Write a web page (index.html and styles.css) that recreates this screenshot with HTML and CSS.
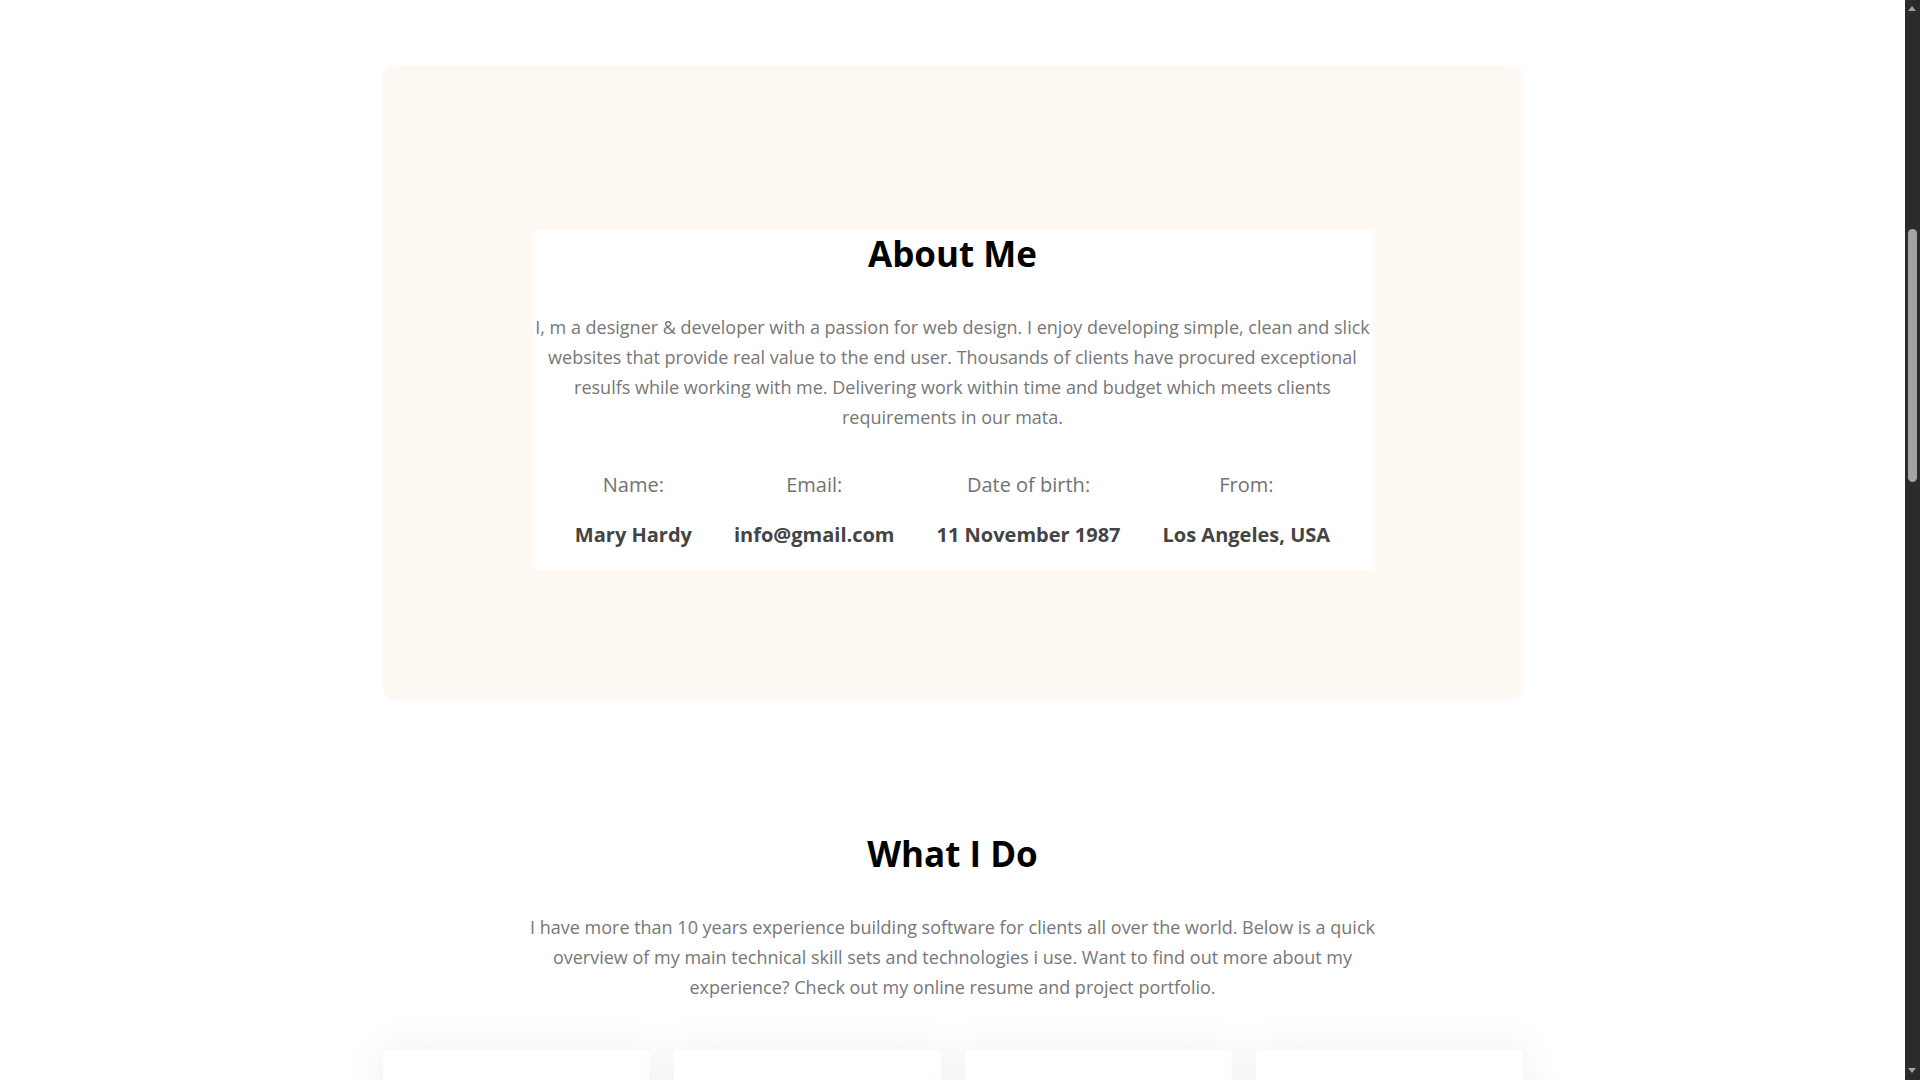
FILE: index.html
```html
<!DOCTYPE html>
<html lang="en">
<head>
<meta charset="utf-8">
<title>About Me</title>
<link rel="stylesheet" href="styles.css">
</head>
<body>
<div class="page">
  <section class="about">
    <div class="container">
      <div class="about-card">
        <div class="about-inner">
          <h2 class="section-title">About Me</h2>
          <p class="section-text">I, m a designer &amp; developer with a passion for web design. I enjoy developing simple, clean and slick websites that provide real value to the end user. Thousands of clients have procured exceptional resulfs while working with me. Delivering work within time and budget which meets clients requirements in our mata.</p>
          <div class="info">
            <div class="info-item"><span class="info-label">Name:</span><span class="info-value">Mary Hardy</span></div>
            <div class="info-item"><span class="info-label">Email:</span><span class="info-value">info@gmail.com</span></div>
            <div class="info-item"><span class="info-label">Date of birth:</span><span class="info-value">11 November 1987</span></div>
            <div class="info-item"><span class="info-label">From:</span><span class="info-value">Los Angeles, USA</span></div>
          </div>
        </div>
      </div>
    </div>
  </section>

  <section class="services">
    <div class="container">
      <h2 class="section-title">What I Do</h2>
      <p class="section-text services-text">I have more than 10 years experience building software for clients all over the world. Below is a quick overview of my main technical skill sets and technologies i use. Want to find out more about my experience? Check out my online resume and project portfolio.</p>
      <div class="cards">
        <div class="card"></div>
        <div class="card"></div>
        <div class="card"></div>
        <div class="card"></div>
      </div>
    </div>
  </section>
</div>

<div class="scrollbar">
  <span class="sb-arrow sb-up"></span>
  <span class="sb-thumb"></span>
  <span class="sb-arrow sb-down"></span>
</div>
</body>
</html>
```

FILE: styles.css
```css
html, body {
  margin: 0;
  padding: 0;
  overflow: hidden;
  background: #ffffff;
}

body {
  font-family: "Open Sans", "Noto Sans", "Liberation Sans", sans-serif;
  color: #777777;
}

.page {
  width: calc(100% - 15px);
}

.container {
  width: 1140px;
  margin: 0 auto;
}

.about {
  padding-top: 65px;
}

.about-card {
  background: #fff8f3;
  border-radius: 10px;
  padding: 165px 0 130px;
}

.about-inner {
  width: 840px;
  margin: 0 auto;
  background: #ffffff;
  padding-bottom: 20px;
  text-align: center;
}

.section-title {
  margin: 0;
  font-size: 35px;
  line-height: 48px;
  font-weight: 700;
  color: #000000;
  text-align: center;
}

.section-text {
  margin: 34px 0 38px;
  font-size: 18px;
  line-height: 30px;
  color: #777777;
  text-align: center;
}

.info {
  display: flex;
  justify-content: center;
  gap: 42px;
}

.info-item {
  display: flex;
  flex-direction: column;
  align-items: center;
}

.info-label {
  font-size: 20px;
  line-height: 30px;
  color: #727272;
  margin-bottom: 20px;
}

.info-value {
  font-size: 20px;
  line-height: 30px;
  font-weight: 700;
  color: #444444;
}

.services {
  padding-top: 130px;
}

.services-text {
  width: 860px;
  margin: 34px auto 48px;
}

.cards {
  display: grid;
  grid-template-columns: repeat(4, 1fr);
  gap: 24px;
}

.card {
  height: 300px;
  background: #ffffff;
  border-radius: 5px;
  box-shadow: 0 0 45px rgba(0, 0, 0, 0.07);
}

/* fake browser scrollbar */
.scrollbar {
  position: fixed;
  top: 0;
  right: 0;
  bottom: 0;
  width: 15px;
  background: #2b2b2b;
}

.sb-thumb {
  position: absolute;
  left: 3px;
  top: 229px;
  width: 9px;
  height: 253px;
  border-radius: 5px;
  background: #a3a3a3;
}

.sb-arrow {
  position: absolute;
  left: 3px;
  width: 0;
  height: 0;
  border-left: 4.5px solid transparent;
  border-right: 4.5px solid transparent;
}

.sb-up {
  top: 6px;
  border-bottom: 5px solid #a3a3a3;
}

.sb-down {
  bottom: 7px;
  border-top: 5px solid #a3a3a3;
}
```
